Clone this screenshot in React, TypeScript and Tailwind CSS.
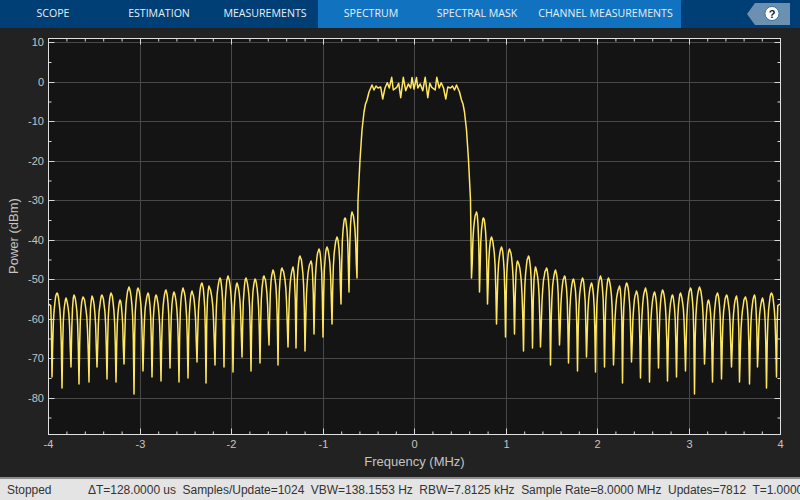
const tabs = [
  { label: "SCOPE", active: false },
  { label: "ESTIMATION", active: false },
  { label: "MEASUREMENTS", active: false },
  { label: "SPECTRUM", active: true },
  { label: "SPECTRAL MASK", active: true },
  { label: "CHANNEL MEASUREMENTS", active: true },
]

const xTicks = [
  { x: 48.5, label: "-4" },
  { x: 140.5, label: "-3" },
  { x: 231.5, label: "-2" },
  { x: 323.5, label: "-1" },
  { x: 414.5, label: "0" },
  { x: 506.5, label: "1" },
  { x: 597.5, label: "2" },
  { x: 689.5, label: "3" },
  { x: 780.5, label: "4" },
]

const yTicks = [
  { y: 42.5, label: "10" },
  { y: 82.5, label: "0" },
  { y: 121.5, label: "-10" },
  { y: 161.5, label: "-20" },
  { y: 200.5, label: "-30" },
  { y: 240.5, label: "-40" },
  { y: 279.5, label: "-50" },
  { y: 319.5, label: "-60" },
  { y: 358.5, label: "-70" },
  { y: 398.5, label: "-80" },
]

// peak, notch, peak, notch ... read off the left half of the trace
const lobes = [
  [50, 299], [52, 377], [57, 293], [62, 388], [66, 298], [71, 367], [74, 295], [79, 384],
  [83, 297], [89, 382], [92, 296], [97, 367], [102, 295], [107, 379], [111, 293], [116, 382],
  [120, 300], [124, 364], [129, 287], [134, 394], [138, 288], [143, 371], [148, 293], [152, 377],
  [156, 295], [161, 381], [166, 290], [170, 368], [174, 292], [179, 382], [183, 288], [188, 378],
  [192, 291], [197, 362], [202, 283], [206, 383], [209, 286], [215, 365], [220, 278], [224, 367],
  [228, 276], [233, 372], [237, 283], [242, 357], [246, 278], [251, 371], [255, 279], [260, 363],
  [264, 276], [269, 345], [273, 270], [278, 365], [282, 268], [288, 347], [293, 267], [296, 348],
  [300, 256], [305, 351], [311, 261], [314, 334], [319, 249], [323, 337], [327, 247], [332, 324],
  [337, 237], [341, 304], [345, 218], [349, 292], [352, 212], [357, 278],
]

const mainLobe = [
  [358, 200], [360, 160], [362, 130], [364, 112], [365.5, 104], [367, 100], [369, 92], [372, 85],
  [374, 90], [376, 86], [378, 88], [380.7, 87], [382.7, 99], [385, 88], [387.3, 82.7], [389.3, 88],
  [391.7, 77.3], [393.3, 90], [396.7, 87.3], [398.7, 83.3], [400.7, 97.7], [403.3, 77.3], [405.7, 90.7],
  [408.3, 84], [410.7, 88], [412, 77.5], [414, 89],
]

function jitter(i: number) {
  const v = Math.sin(i * 12.9898) * 43758.5453
  return (v - Math.floor(v) - 0.5) * 3.4
}

function buildTrace() {
  const left: number[][] = [[48.5, 304]]
  let n = 0
  for (let i = 0; i < lobes.length - 1; i++) {
    const a = lobes[i]
    const b = lobes[i + 1]
    const aIsPeak = i % 2 === 0
    const peak = aIsPeak ? a : b
    const notch = aIsPeak ? b : a
    const span = b[0] - a[0]
    const steps = Math.max(2, Math.round(span / 0.71))
    for (let s = 1; s <= steps; s++) {
      const x = a[0] + (span * s) / steps
      const u = Math.abs(x - peak[0]) / Math.abs(notch[0] - peak[0])
      const drop = -79 * Math.log10(Math.max(Math.cos((u * Math.PI) / 2), 1e-4))
      const y = Math.min(notch[1], peak[1] + drop)
      left.push([x, y + (u > 0 && u < 0.6 ? Math.abs(jitter(n++)) : 0)])
    }
  }
  left.push(...mainLobe)
  const right = [...left].reverse().slice(1).map(([x, y]) => [828.5 - x, y])
  return [...left, ...right].map(([x, y]) => `${x.toFixed(1)},${y.toFixed(1)}`).join(" ")
}

const trace = buildTrace()

const minorX: number[] = []
for (let i = 0; i < xTicks.length - 1; i++) {
  for (let k = 1; k < 5; k++) {
    minorX.push(xTicks[i].x + ((xTicks[i + 1].x - xTicks[i].x) * k) / 5)
  }
}
const minorY = [...yTicks.slice(0, -1).map((t, i) => (t.y + yTicks[i + 1].y) / 2), 418]

function SpectrumPlot() {
  return (
    <svg className="block flex-1 w-full" viewBox="0 28 800 449" width={800} height={449}>
      <rect x={48.5} y={38.5} width={732} height={396} fill="#141414" />
      <g stroke="#484848" strokeWidth={1}>
        {xTicks.slice(1, -1).map((t) => (
          <line key={t.x} x1={t.x} x2={t.x} y1={38.5} y2={434.5} />
        ))}
        {yTicks.map((t) => (
          <line key={t.y} x1={48.5} x2={780.5} y1={t.y} y2={t.y} />
        ))}
      </g>
      <polyline points={trace} fill="none" stroke="#ffe75f" strokeWidth={1.5} strokeLinejoin="round" />
      <g stroke="#d8d8d8" strokeWidth={1}>
        {minorX.map((x) => (
          <g key={x}>
            <line x1={x} x2={x} y1={38.5} y2={41.5} />
            <line x1={x} x2={x} y1={431.5} y2={434.5} />
          </g>
        ))}
        {minorY.map((y) => (
          <g key={y}>
            <line x1={48.5} x2={51.5} y1={y} y2={y} />
            <line x1={777.5} x2={780.5} y1={y} y2={y} />
          </g>
        ))}
        {yTicks.map((t) => (
          <g key={t.y}>
            <line x1={48.5} x2={54.5} y1={t.y} y2={t.y} />
            <line x1={774.5} x2={780.5} y1={t.y} y2={t.y} />
          </g>
        ))}
        {xTicks.slice(1, -1).map((t) => (
          <g key={t.x}>
            <line x1={t.x} x2={t.x} y1={38.5} y2={44.5} />
            <line x1={t.x} x2={t.x} y1={428.5} y2={434.5} />
          </g>
        ))}
      </g>
      <rect x={48.5} y={38.5} width={732} height={396} fill="none" stroke="#e0e0e0" strokeWidth={1} />
      <g className="font-['Liberation_Sans',sans-serif] text-[11px]" fill="#c4c4c4">
        {yTicks.map((t) => (
          <text key={t.label} x={44} y={t.y + 3.5} textAnchor="end">
            {t.label}
          </text>
        ))}
        {xTicks.map((t) => (
          <text key={t.label} x={t.x} y={448} textAnchor="middle">
            {t.label}
          </text>
        ))}
      </g>
      <g className="font-['Liberation_Sans',sans-serif] text-[13px]" fill="#c4c4c4">
        <text x={414.5} y={465.5} textAnchor="middle">
          Frequency (MHz)
        </text>
        <text transform="translate(18 236) rotate(-90)" textAnchor="middle">
          Power (dBm)
        </text>
      </g>
    </svg>
  )
}

function HelpButton() {
  return (
    <svg className="absolute right-[10px] top-[3px]" width={43} height={22} viewBox="0 0 43 22">
      <polygon points="0,11 8,0 43,0 43,22 8,22" fill="#6c90b2" />
      <circle cx={25} cy={10.5} r={7} fill="#ffffff" stroke="#1b5f9e" strokeWidth={0.8} />
      <text x={25} y={14.5} textAnchor="middle" fill="#1a1a1a" className="font-['Liberation_Sans',sans-serif] text-[11px] font-bold">
        ?
      </text>
    </svg>
  )
}

export default function App() {
  return (
    <div className="w-[800px] h-[500px] flex flex-col overflow-hidden bg-[#222222]">
      <div className="relative flex h-[28px] shrink-0 bg-[#003f75]">
        {tabs.map((tab, i) => (
          <div
            key={tab.label}
            className={
              "flex items-center justify-center h-full whitespace-nowrap font-['Open_Sans',sans-serif] text-[10.6px] text-[#e6eef5] " +
              (i === 5 ? "w-[151px] " : "w-[106px] ") +
              (tab.active ? "bg-[#1172c0]" : "")
            }
          >
            {tab.label}
          </div>
        ))}
        <HelpButton />
      </div>
      <SpectrumPlot />
      <div className="flex items-center h-[23px] shrink-0 border-t-2 border-[#8c8c8c] bg-[#e4e4e4] pl-[7px] overflow-hidden whitespace-pre font-['Liberation_Sans',sans-serif] text-[12px] tracking-[-0.035px] text-[#333333]">
        <span className="w-[81px] shrink-0">Stopped</span>
        <span className="shrink-0">
          ΔT=128.0000 us  Samples/Update=1024  VBW=138.1553 Hz  RBW=7.8125 kHz  Sample Rate=8.0000 MHz  Updates=7812  T=1.0000
        </span>
      </div>
    </div>
  )
}
